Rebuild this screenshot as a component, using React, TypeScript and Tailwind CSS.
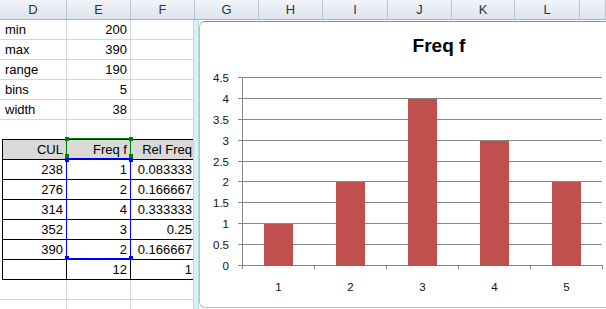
import React from "react";

const headerCols = [
  { label: "D", w: "w-[67px]" },
  { label: "E", w: "w-[64px]" },
  { label: "F", w: "w-[64px]" },
  { label: "G", w: "w-[64px]" },
  { label: "H", w: "w-[64px]" },
  { label: "I", w: "w-[65px]" },
  { label: "J", w: "w-[64px]" },
  { label: "K", w: "w-[63px]" },
  { label: "L", w: "w-[65px]" },
  { label: "", w: "flex-1" },
];

const stats = [
  ["min", "200"],
  ["max", "390"],
  ["range", "190"],
  ["bins", "5"],
  ["width", "38"],
];

const freqRows = [
  ["238", "1", "0.083333"],
  ["276", "2", "0.166667"],
  ["314", "4", "0.333333"],
  ["352", "3", "0.25"],
  ["390", "2", "0.166667"],
  ["", "12", "1"],
];

const freq = [1, 2, 4, 3, 2];

const HeaderRow = () => (
  <div className="flex h-[20px] border-b border-[#9eb6ce] bg-gradient-to-b from-[#f1f4f9] to-[#dde4ee] text-[#333]">
    {headerCols.map((c, i) => (
      <div
        key={i}
        className={`${c.w} shrink-0 border-r border-[#b5c7da] text-center leading-[19px]`}
      >
        {c.label}
      </div>
    ))}
  </div>
);

const Chart = () => {
  const x0 = 42;
  const y0 = 243;
  const unit = 41.8;
  const cat = 72;
  const ticks = [0, 0.5, 1, 1.5, 2, 2.5, 3, 3.5, 4, 4.5];
  return (
    <svg width="478" height="285" className="block">
      <text x="239" y="30" textAnchor="middle" fontSize="19" fontWeight="bold" fill="#000">
        Freq f
      </text>
      {ticks.map((t) => {
        const y = Math.round(y0 - t * unit) + 0.5;
        return (
          <g key={t}>
            <line x1={x0 - 4} x2={402} y1={y} y2={y} stroke="#868686" shapeRendering="crispEdges" />
            <text x="29" y={y} textAnchor="end" dominantBaseline="central" fontSize="11.5" fill="#111">
              {t}
            </text>
          </g>
        );
      })}
      <line x1={x0 + 0.5} x2={x0 + 0.5} y1={y0 - 4.5 * unit} y2={y0 + 4} stroke="#868686" shapeRendering="crispEdges" />
      {[1, 2, 3, 4, 5].map((i) => (
        <line
          key={i}
          x1={x0 + cat * i + 0.5}
          x2={x0 + cat * i + 0.5}
          y1={y0}
          y2={y0 + 4}
          stroke="#868686"
          shapeRendering="crispEdges"
        />
      ))}
      {freq.map((v, i) => (
        <g key={i}>
          <rect
            x={x0 + cat * i + 22}
            y={Math.round(y0 - v * unit) + 1}
            width="29"
            height={Math.round(v * unit)}
            fill="#c0504d"
          />
          <text x={x0 + cat * i + 36.5} y="269" textAnchor="middle" fontSize="11.5" fill="#111">
            {i + 1}
          </text>
        </g>
      ))}
    </svg>
  );
};

export default function App() {
  return (
    <div className="relative h-[309px] w-[606px] overflow-hidden bg-white font-['Liberation_Sans',Arial,sans-serif] text-[13px] text-black">
      <HeaderRow />
      <div className="flex h-[289px]">
        <div className="w-[193px] shrink-0 overflow-hidden">
          <div className="w-[195px]">
            {stats.map(([k, v]) => (
              <div key={k} className="flex h-[20px] border-b border-[#d0d7e5] leading-[19px]">
                <div className="w-[67px] shrink-0 border-r border-[#d0d7e5] pl-[5px]">{k}</div>
                <div className="w-[64px] shrink-0 border-r border-[#d0d7e5] pr-[3px] text-right">{v}</div>
                <div className="w-[64px] shrink-0" />
              </div>
            ))}
            <div className="flex h-[19px]">
              <div className="w-[67px] shrink-0 border-r border-[#d0d7e5]" />
              <div className="w-[64px] shrink-0 border-r border-[#d0d7e5]" />
            </div>
            <div className="ml-[2px] border-l border-t border-black">
              <div className="flex h-[20px] border-b border-black bg-[#d9d9d9] leading-[19px]">
                <div className="w-[64px] shrink-0 border-r border-black pr-[3px] text-right">CUL</div>
                <div className="w-[64px] shrink-0 border-r border-black pr-[3px] text-right">Freq f</div>
                <div className="w-[64px] shrink-0 pr-[3px] text-right">Rel Freq</div>
              </div>
              {freqRows.map((r, i) => (
                <div key={i} className="flex h-[20px] border-b border-black leading-[19px]">
                  <div className="w-[64px] shrink-0 border-r border-black pr-[3px] text-right">{r[0]}</div>
                  <div className="w-[64px] shrink-0 border-r border-black pr-[3px] text-right">{r[1]}</div>
                  <div className="w-[64px] shrink-0 whitespace-nowrap pr-[3px] text-right">{r[2]}</div>
                </div>
              ))}
            </div>
            <div className="flex h-[20px] border-b border-[#d0d7e5]">
              <div className="w-[67px] shrink-0 border-r border-[#d0d7e5]" />
              <div className="w-[64px] shrink-0 border-r border-[#d0d7e5]" />
            </div>
            <div className="flex h-[20px]">
              <div className="w-[67px] shrink-0 border-r border-[#d0d7e5]" />
              <div className="w-[64px] shrink-0 border-r border-[#d0d7e5]" />
            </div>
          </div>
        </div>
        <div className="w-[6px] shrink-0 border-x border-[#b9dbe3] bg-[#dcf0f4]" />
        <div className="flex-1 overflow-hidden pt-[1px]">
          <div className="h-[287px] w-[480px] rounded-[6px] border border-[#bdbdbd] border-t-[#8f8f8f] bg-white">
            <Chart />
          </div>
        </div>
      </div>

      {/* selection overlays */}
      <div className="absolute left-[66px] top-[138px] h-[20px] w-[65px] border border-b-0 border-[#008000]" />
      <div className="absolute left-[66px] top-[158px] h-[101px] w-[65px] border border-[#0000ff]" />
      <div className="absolute left-[65px] top-[137px] h-[4px] w-[4px] bg-[#008000]" />
      <div className="absolute left-[129px] top-[137px] h-[4px] w-[4px] bg-[#008000]" />
      <div className="absolute left-[65px] top-[154px] h-[4px] w-[4px] bg-[#008000]" />
      <div className="absolute left-[129px] top-[154px] h-[4px] w-[4px] bg-[#008000]" />
      <div className="absolute left-[65px] top-[158px] h-[4px] w-[4px] bg-[#0000ff]" />
      <div className="absolute left-[129px] top-[158px] h-[4px] w-[4px] bg-[#0000ff]" />
      <div className="absolute left-[65px] top-[256px] h-[4px] w-[4px] bg-[#0000ff]" />
      <div className="absolute left-[129px] top-[256px] h-[4px] w-[4px] bg-[#0000ff]" />
    </div>
  );
}
